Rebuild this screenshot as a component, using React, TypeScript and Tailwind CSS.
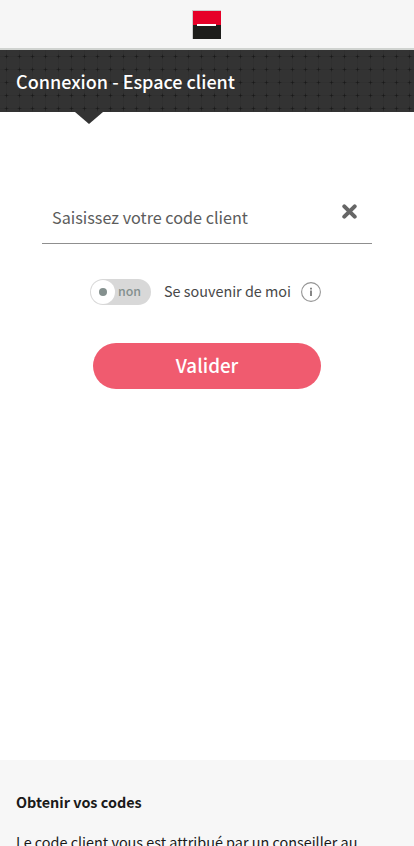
import React from "react";

function Logo() {
  return (
    <svg width="29" height="29" viewBox="0 0 29 29" aria-label="Société Générale" shapeRendering="crispEdges">
      <rect width="29" height="29" fill="#cdcdcd" />
      <rect x="1" y="1" width="28" height="14" fill="#e60028" />
      <rect x="1" y="15" width="28" height="14" fill="#1d1d1b" />
      <rect x="5" y="14" width="19" height="2" fill="#ffffff" />
    </svg>
  );
}

function GridPattern() {
  return (
    <svg className="absolute inset-0 h-full w-full" shapeRendering="crispEdges" aria-hidden="true">
      <defs>
        <pattern id="plus" width="13" height="13" patternUnits="userSpaceOnUse">
          <path d="M6 0h1v13h-1zM0 6h13v1H0z" fill="#303030" />
          <path d="M6 5h1v3h-1zM5 6h3v1H5z" fill="#222222" />
          <path d="M6 4h1v1h-1zM6 8h1v1h-1zM4 6h1v1h-1zM8 6h1v1h-1z" fill="#2b2b2b" />
          <path d="M6 6h1v1h-1z" fill="#191919" />
        </pattern>
      </defs>
      <rect width="100%" height="100%" fill="url(#plus)" />
    </svg>
  );
}

export default function App() {
  return (
    <div className="flex h-[846px] w-full flex-col overflow-hidden bg-white font-['Noto_Sans_CJK_SC','Noto_Sans',sans-serif]">
      <header className="flex h-[50px] shrink-0 justify-center border-b-2 border-[#d0d3d0] bg-[#f6f6f6] pr-px pt-2.5">
        <Logo />
      </header>
      <div className="relative flex h-[62px] shrink-0 items-center bg-[#333333] px-4">
        <GridPattern />
        <h1 className="relative whitespace-nowrap text-[18px] font-medium leading-6 text-white">
          Connexion - Espace client
        </h1>
        <svg className="absolute left-[75px] top-[62px]" width="28" height="12" viewBox="0 0 28 12">
          <path d="M0 0h28L14 12z" fill="#333333" />
        </svg>
      </div>
      <main className="flex grow flex-col px-[42px] pt-[80px]">
        <div className="flex h-[52px] border-b border-[#8f8f8f]">
          <input
            aria-label="Code client"
            placeholder="Saisissez votre code client"
            className="h-[50px] min-w-0 grow pl-2.5 text-[16.2px] outline-none placeholder:text-[#5c5c5c] placeholder:opacity-100"
          />
          <button aria-label="Effacer" className="mr-[15px] mt-3 size-[15px]">
            <svg width="15" height="15" viewBox="0 0 15 15">
              <path d="M2.3 2.3l10.4 10.4M12.7 2.3L2.3 12.7" stroke="#666666" strokeWidth="4" strokeLinecap="round" />
            </svg>
          </button>
        </div>
        <div className="ml-12 mt-[35px] flex h-[26px] items-center">
          <div className="flex h-[26px] w-[61px] items-center rounded-full bg-[#d8d8d8] pl-px">
            <span className="flex size-6 items-center justify-center rounded-full bg-white">
              <span className="size-2 rounded-full bg-[#84908e]" />
            </span>
            <span className="mb-0.5 ml-[3px] text-[12.4px] font-medium leading-6 text-[#84908e]">non</span>
          </div>
          <span className="mb-0.5 ml-[13px] w-[137px] whitespace-nowrap text-[14.4px] leading-6 text-[#484848]">Se souvenir de moi</span>
          <svg width="20" height="20" viewBox="0 0 20 20" aria-label="Information">
            <circle cx="10" cy="10" r="9.4" fill="none" stroke="#949494" strokeWidth="1.1" />
            <path d="M9 8.5h2V14H9zM9 5.8h2v1.6H9z" fill="#858585" />
          </svg>
        </div>
        <button className="ml-[51px] mt-[38px] h-[46px] w-[228px] rounded-full bg-[#f05b6f] pb-0.5 text-[18.8px] font-medium text-white">
          Valider
        </button>
      </main>
      <footer className="h-[86px] shrink-0 overflow-hidden bg-[#f7f7f7] px-4 pt-[30px] text-[#1a1a1a]">
        <h2 className="whitespace-nowrap text-[14.4px] font-bold leading-6">Obtenir vos codes</h2>
        <p className="mt-4 whitespace-nowrap text-[14.4px] leading-6">Le code client vous est attribué par un conseiller au</p>
      </footer>
    </div>
  );
}
